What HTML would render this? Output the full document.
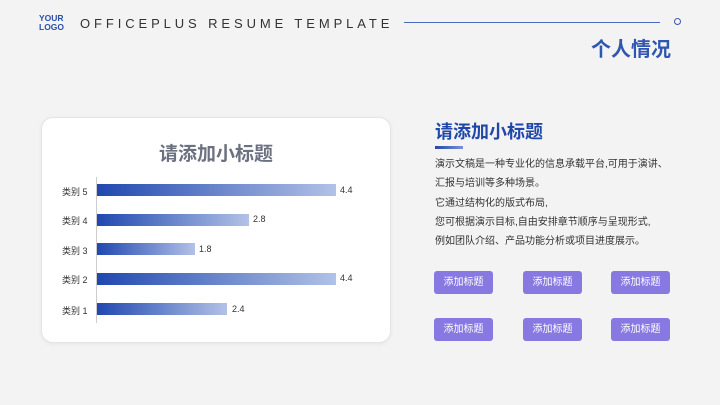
<!DOCTYPE html>
<html><head><meta charset="utf-8"><style>
*{margin:0;padding:0;box-sizing:border-box}
body{width:720px;height:405px;overflow:hidden;background:#f3f3f4;font-family:"Liberation Sans","Noto Sans CJK SC",sans-serif;position:relative}
.a{position:absolute}
.logo{left:39px;top:14px;font-size:8.5px;font-weight:bold;color:#2a4fa8;line-height:9px}
.hdr{left:80px;top:16px;font-size:13px;letter-spacing:3.9px;color:#333}
.line{left:404px;top:22px;width:256px;height:1px;background:#4a6cc0}
.dot{left:674px;top:18px;width:7px;height:7px;border:1.5px solid #3a5ab0;border-radius:50%}
.ttl{left:591px;top:33px;font-size:20px;font-weight:bold;color:#2f56b0}
.card{left:41px;top:117px;width:350px;height:226px;background:#fff;border:1px solid #e3e5ec;border-radius:12px;box-shadow:0 1px 4px rgba(0,0,0,.06)}
.ct{left:159px;top:139px;font-size:19px;font-weight:bold;color:#6b7180}
.axis{left:96px;top:177px;width:1px;height:146px;background:#ccc}
.bar{height:12px;background:linear-gradient(90deg,#2048b0,#b2c1e6)}
.lab{font-size:9px;color:#333}
.st{left:435px;top:118px;font-size:18px;font-weight:bold;color:#1f48a8}
.ul{left:435px;top:146px;width:28px;height:3px;background:linear-gradient(90deg,#1f48a8,#7a94d6)}
.txt{left:435px;top:155px;font-size:10px;line-height:19.3px;color:#333;white-space:nowrap}
.btn{width:59px;height:23px;background:#8878e2;color:#fff;font-size:10px;border-radius:3px;text-align:center;line-height:23px}
</style></head><body>
<div class="a logo">YOUR<br>LOGO</div>
<div class="a hdr">OFFICEPLUS RESUME TEMPLATE</div>
<div class="a line"></div><div class="a dot"></div>
<div class="a ttl">个人情况</div>
<div class="a card"></div>
<div class="a ct">请添加小标题</div>
<div class="a axis"></div>
<div class="a bar" style="left:97px;top:184px;width:239px"></div>
<div class="a bar" style="left:97px;top:214px;width:152px"></div>
<div class="a bar" style="left:97px;top:243px;width:98px"></div>
<div class="a bar" style="left:97px;top:273px;width:239px"></div>
<div class="a bar" style="left:97px;top:303px;width:130px"></div>
<div class="a lab" style="left:62px;top:185px">类别 5</div>
<div class="a lab" style="left:62px;top:214px">类别 4</div>
<div class="a lab" style="left:62px;top:244px">类别 3</div>
<div class="a lab" style="left:62px;top:273px">类别 2</div>
<div class="a lab" style="left:62px;top:304px">类别 1</div>
<div class="a lab" style="left:340px;top:185px">4.4</div>
<div class="a lab" style="left:253px;top:214px">2.8</div>
<div class="a lab" style="left:199px;top:244px">1.8</div>
<div class="a lab" style="left:340px;top:273px">4.4</div>
<div class="a lab" style="left:232px;top:304px">2.4</div>
<div class="a st">请添加小标题</div>
<div class="a ul"></div>
<div class="a txt">演示文稿是一种专业化的信息承载平台,可用于演讲、<br>汇报与培训等多种场景。<br>它通过结构化的版式布局,<br>您可根据演示目标,自由安排章节顺序与呈现形式,<br>例如团队介绍、产品功能分析或项目进度展示。</div>
<div class="a btn" style="left:434px;top:271px">添加标题</div>
<div class="a btn" style="left:523px;top:271px">添加标题</div>
<div class="a btn" style="left:611px;top:271px">添加标题</div>
<div class="a btn" style="left:434px;top:318px">添加标题</div>
<div class="a btn" style="left:523px;top:318px">添加标题</div>
<div class="a btn" style="left:611px;top:318px">添加标题</div>
</body></html>
